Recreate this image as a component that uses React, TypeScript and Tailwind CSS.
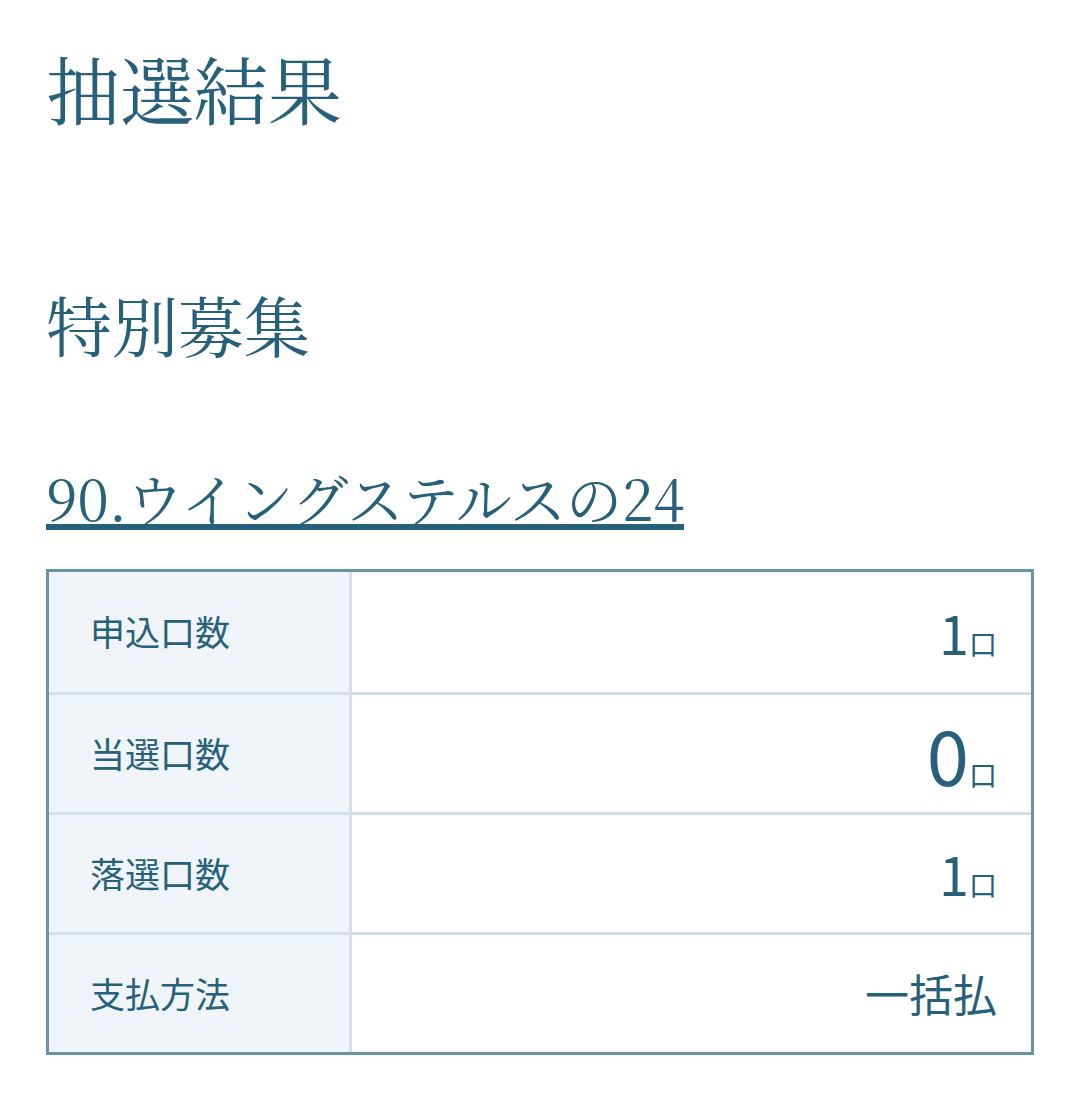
import React from "react";

const serif = { fontFamily: '"Noto Serif CJK JP", "IPAMincho", "Liberation Serif", "Noto Sans CJK JP", serif' };
const sans = { fontFamily: '"Noto Sans CJK JP", "Noto Sans", sans-serif' };

const rows: { label: string; value: React.ReactNode }[] = [
  {
    label: "申込口数",
    value: (
      <span className="flex items-baseline justify-end">
        <span className="text-[54px] leading-none">1</span>
        <span className="text-[28px] leading-none">口</span>
      </span>
    ),
  },
  {
    label: "当選口数",
    value: (
      <span className="flex items-baseline justify-end">
        <span className="text-[76px] leading-none">0</span>
        <span className="text-[28px] leading-none">口</span>
      </span>
    ),
  },
  {
    label: "落選口数",
    value: (
      <span className="flex items-baseline justify-end">
        <span className="text-[54px] leading-none">1</span>
        <span className="text-[28px] leading-none">口</span>
      </span>
    ),
  },
  {
    label: "支払方法",
    value: <span className="text-[44px] leading-none">一括払</span>,
  },
];

export default function App() {
  return (
    <div className="bg-white text-[#27607a] px-[46px] pt-[50px] pb-[58px] w-[1080px]">
      <h1 className="text-[74px] leading-none font-normal" style={serif}>
        抽選結果
      </h1>
      <h2 className="text-[66px] leading-none font-normal mt-[167px]" style={serif}>
        特別募集
      </h2>
      <div className="mt-[115px]">
        <a
          className="text-[56px] leading-[0.92] inline-block border-b-[6px] border-[#27607a]"
          style={serif}
        >
          90.ウイングステルスの24
        </a>
      </div>
      <div className="mt-[39px] border-[3px] border-[#6a94a6] w-[988px]" style={sans}>
        {rows.map((r, i) => (
          <div
            key={r.label}
            className={
              "flex h-[120px] " + (i > 0 ? "border-t-[3px] border-[#d2dfe6]" : "")
            }
          >
            <div className="w-[303px] shrink-0 bg-[#eef4f8] border-r-[3px] border-[#d2dfe6] flex items-center pl-[41px] text-[35px]">
              {r.label}
            </div>
            <div className="flex-1 flex items-center justify-end pr-[34px]">{r.value}</div>
          </div>
        ))}
      </div>
    </div>
  );
}
